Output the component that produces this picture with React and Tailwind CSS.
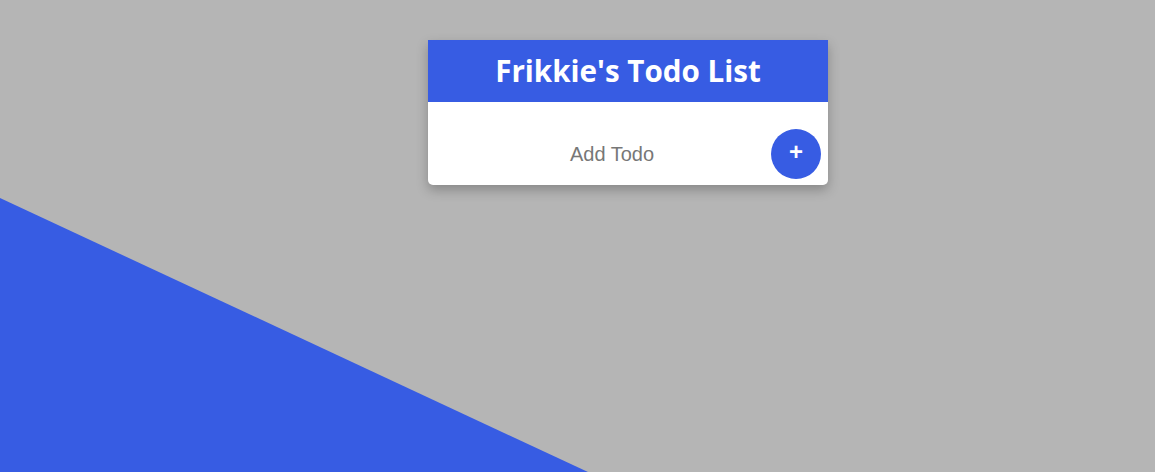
export default function App() {
  return (
    <div className="relative h-[472px] overflow-hidden bg-[#b5b5b5]">
      <div className="absolute inset-0 bg-[#375ce3] [clip-path:polygon(0_198px,588px_472px,0_472px)]" />
      <div className="relative flex justify-center pl-[101px] pt-[40px]">
        <div className="w-[400px] rounded-b-[5px] bg-white shadow-[0_5px_12px_rgba(0,0,0,0.25)]">
          <div className="flex h-[62px] items-center justify-center bg-[#375ce3]">
            <h1 className="text-[29.6px] font-bold text-white font-['Open_Sans',sans-serif]">Frikkie's Todo List</h1>
          </div>
          <div className="flex h-[83px] items-end px-[7px] pb-[6px]">
            <input
              placeholder="Add Todo"
              className="h-[50px] flex-1 bg-transparent pl-[18px] text-center text-[20px] font-['Liberation_Sans',sans-serif] outline-none placeholder:text-[#777]"
            />
            <button className="flex h-[50px] w-[50px] items-center justify-center rounded-full bg-[#375ce3] pb-[4px] text-[24px] font-bold leading-none text-white font-['Liberation_Sans',sans-serif]">
              +
            </button>
          </div>
        </div>
      </div>
    </div>
  );
}
